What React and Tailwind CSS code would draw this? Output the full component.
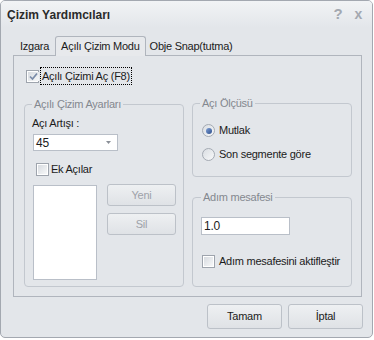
const font = { fontFamily: '"Liberation Sans", Arial, sans-serif' };

const CheckBox = ({ checked }) => (
  <span className="w-[13px] h-[13px] shrink-0 border border-[#9ea4ad] bg-white p-px flex">
    <span className="flex-1 bg-linear-to-br from-[#d7dbe0] to-[#f7f8f9] flex items-center justify-center">
      {checked && (
        <svg width="11" height="11" viewBox="0 0 11 11">
          <path d="M2 5.5 L4.5 8 L9 2.5" fill="none" stroke="#7a8ba8" strokeWidth="1.7" />
        </svg>
      )}
    </span>
  </span>
);

const Radio = ({ checked }) => (
  <span className="w-[13px] h-[13px] shrink-0 rounded-full border border-[#a4aab3] bg-linear-to-br from-[#d9dde2] to-[#f8f9fa] flex items-center justify-center">
    {checked && (
      <span className="w-[6px] h-[6px] rounded-full bg-linear-to-br from-[#7fa0d6] to-[#2f4f8c]" />
    )}
  </span>
);

const Legend = ({ children, ml }) => (
  <span className={`block w-fit -mt-[7px] px-[2px] leading-[13px] bg-[#e3e6ea] text-[#83888f] ${ml}`}>
    {children}
  </span>
);

const Btn = ({ children, disabled, className }) => (
  <div
    className={`flex items-center justify-center rounded-[3px] border border-[#bcc1c8] bg-linear-to-b from-[#eef0f2] to-[#dfe2e6] ${disabled ? 'text-[#9ea2a9]' : 'text-[#1b1b1b]'} ${className}`}
  >
    {children}
  </div>
);

export default function App() {
  return (
    <div className="w-[374px] h-[340px] bg-white text-[11px] tracking-[-0.25px] text-[#1b1b1b]" style={font}>
      <div className="w-[373px] h-[338px] border border-[#a3a8b0] rounded-[5px] bg-[#e3e6ea] flex flex-col overflow-hidden">
        {/* title bar */}
        <div className="h-[27px] shrink-0 pl-[6px] pr-[10px] flex items-center justify-between bg-linear-to-b from-[#f1f3f5] to-[#e3e6ea]">
          <span className="text-[12px] font-bold tracking-normal text-[#2a2a2a]">Çizim Yardımcıları</span>
          <div className="flex items-center gap-[12px] text-[15px] font-bold text-[#a3a8b0]">
            <span>?</span>
            <span className="text-[14px]">x</span>
          </div>
        </div>

        {/* tabs */}
        <div className="mt-[8px] ml-[13px] flex items-end h-[20px] relative z-10">
          <div className="h-[19px] px-[6px] flex items-center">Izgara</div>
          <div className="h-[20px] px-[5px] flex items-center border border-b-0 border-[#b0b5bd] rounded-t-[3px] bg-[#e7e9ec]">
            Açılı Çizim Modu
          </div>
          <div className="h-[19px] px-[4px] flex items-center">Obje Snap(tutma)</div>
        </div>

        {/* tab panel */}
        <div className="ml-[12px] -mt-px w-[349px] h-[242px] border border-[#b0b5bd] flex flex-col">
          <div className="mt-[11px] ml-[12px] flex items-center h-[18px]">
            <CheckBox checked />
            <span className="ml-px h-[18px] px-[1px] border border-dotted border-black flex items-center">
              Açılı Çizimi Aç (F8)
            </span>
          </div>

          <div className="flex items-start">
            {/* left group */}
            <div className="ml-[10px] mt-[19px] w-[160px] h-[183px] border border-[#c3c8cf] rounded-[4px] flex flex-col">
              <Legend ml="ml-[7px]">Açılı Çizim Ayarları</Legend>
              <span className="mt-[6px] ml-[7px] leading-[13px]">Açı Artışı :</span>
              <div className="mt-[4px] ml-[8px] w-[85px] h-[17px] border border-[#b9bfc8] bg-white flex items-center justify-between pl-[2px] pr-[6px]">
                <span className="text-[12px]">45</span>
                <svg width="5" height="3" viewBox="0 0 5 3">
                  <path d="M0 0 H5 L2.5 3 Z" fill="#8a8f97" />
                </svg>
              </div>
              <div className="mt-[12px] ml-[11px] flex items-center gap-[2px] h-[13px]">
                <CheckBox />
                <span>Ek Açılar</span>
              </div>
              <div className="mt-[9px] flex items-start">
                <div className="ml-[8px] w-[64px] h-[95px] border border-[#b9bfc8] bg-white" />
                <div className="ml-[10px] -mt-px flex flex-col gap-[7px]">
                  <Btn disabled className="w-[69px] h-[22px]">Yeni</Btn>
                  <Btn disabled className="w-[69px] h-[22px]">Sil</Btn>
                </div>
              </div>
            </div>

            {/* right column */}
            <div className="ml-[8px] mt-[18px] w-[160px] flex flex-col gap-[20px]">
              <div className="h-[74px] border border-[#c3c8cf] rounded-[4px] flex flex-col">
                <Legend ml="ml-[7px]">Açı Ölçüsü</Legend>
                <div className="mt-[14px] ml-[9px] flex items-center gap-[4px] h-[13px]">
                  <Radio checked />
                  <span>Mutlak</span>
                </div>
                <div className="mt-[11px] ml-[9px] flex items-center gap-[4px] h-[13px]">
                  <Radio />
                  <span>Son segmente göre</span>
                </div>
              </div>
              <div className="h-[90px] border border-[#c3c8cf] rounded-[4px] flex flex-col">
                <Legend ml="ml-[8px]">Adım mesafesi</Legend>
                <div className="mt-[13px] ml-[8px] w-[89px] h-[18px] border border-[#b9bfc8] bg-white flex items-center pl-[2px]">
                  <span className="text-[12px]">1.0</span>
                </div>
                <div className="mt-[20px] ml-[9px] flex items-center gap-[4px] h-[13px]">
                  <CheckBox />
                  <span>Adım mesafesini aktifleştir</span>
                </div>
              </div>
            </div>
          </div>
        </div>

        {/* footer buttons */}
        <div className="mt-[7px] pr-[9px] flex justify-end gap-[6px]">
          <Btn className="w-[75px] h-[25px]">Tamam</Btn>
          <Btn className="w-[75px] h-[25px]">İptal</Btn>
        </div>
      </div>
    </div>
  );
}
